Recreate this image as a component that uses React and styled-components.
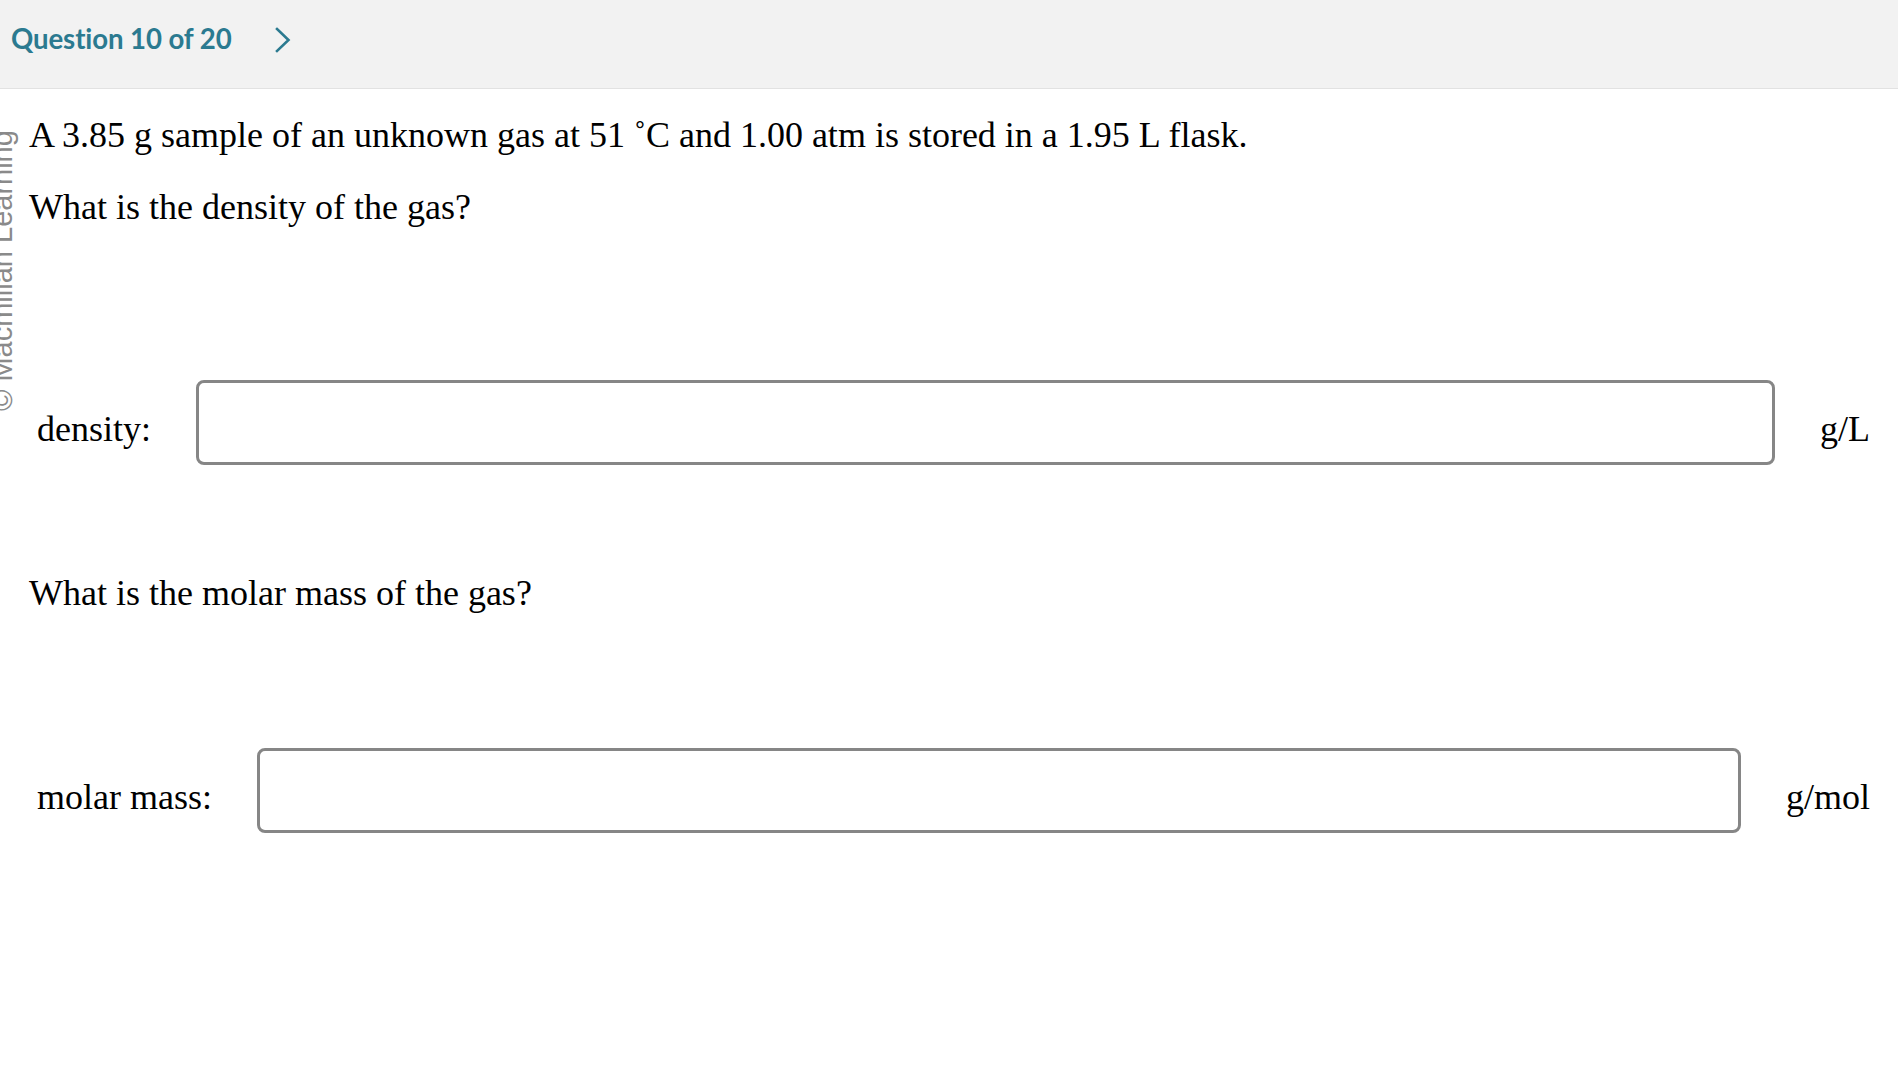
import React from 'react';
import styled, { createGlobalStyle } from 'styled-components';

const GlobalStyle = createGlobalStyle`
  html, body {
    margin: 0;
    padding: 0;
    background: #fff;
  }
  body {
    overflow: hidden;
  }
`;

const App = () => {
  return (
    <Page>
      <GlobalStyle />
      <Header>
        <QuestionTitle>Question 10 of 20</QuestionTitle>
        <NextButton aria-label="Next question">
          <svg width="16" height="26" viewBox="0 0 16 26" fill="none">
            <polyline
              points="2,2 13.5,13 2,24"
              stroke="#2b7a90"
              strokeWidth="2.6"
              strokeLinecap="square"
              strokeLinejoin="miter"
            />
          </svg>
        </NextButton>
      </Header>

      <Watermark>© Macmillan Learning</Watermark>

      <Content>
        <Prompt top={26}>
          A 3.85 g sample of an unknown gas at 51 ˚C and 1.00 atm is stored in a 1.95 L flask.
        </Prompt>
        <Prompt top={32}>What is the density of the gas?</Prompt>

        <AnswerRow top={153}>
          <FieldLabel>density:</FieldLabel>
          <AnswerInput type="text" />
          <Unit>g/L</Unit>
        </AnswerRow>

        <Prompt top={108}>What is the molar mass of the gas?</Prompt>

        <AnswerRow top={135}>
          <FieldLabel>molar mass:</FieldLabel>
          <AnswerInput type="text" />
          <Unit>g/mol</Unit>
        </AnswerRow>
      </Content>
    </Page>
  );
};

// Styled Components
const Page = styled.div`
  position: relative;
  width: 100%;
  min-height: 1068px;
  background: #fff;
`;

const Header = styled.header`
  height: 89px;
  box-sizing: border-box;
  background: #f2f2f2;
  border-bottom: 1px solid #e2e2e2;
  display: flex;
  align-items: center;
  padding: 0 0 11px 11px;
`;

const QuestionTitle = styled.h1`
  margin: 0;
  font-family: Lato, "Open Sans", sans-serif;
  font-weight: 700;
  font-size: 27.6px;
  letter-spacing: -0.1px;
  color: #2b7a90;
`;

const NextButton = styled.button`
  margin-left: 43px;
  margin-top: 2px;
  padding: 0;
  border: none;
  background: transparent;
  display: flex;
  align-items: center;
  cursor: pointer;
`;

const Watermark = styled.div`
  position: absolute;
  left: -12px;
  top: 411px;
  transform-origin: 0 0;
  transform: rotate(-90deg);
  font-family: "Liberation Sans", Arial, sans-serif;
  font-size: 29px;
  line-height: 29px;
  color: #8a8a8a;
  white-space: nowrap;
  pointer-events: none;
`;

const Content = styled.main`
  padding: 0 28px 0 29px;
  font-family: "Liberation Serif", "Times New Roman", serif;
  font-size: 36px;
  color: #000;
`;

const Prompt = styled.p`
  margin: ${(props) => props.top}px 0 0 0;
  line-height: 40px;
`;

const AnswerRow = styled.div`
  margin-top: ${(props) => props.top}px;
  display: flex;
  align-items: center;
  gap: 45px;
  padding-left: 8px;
`;

const FieldLabel = styled.label`
  line-height: 40px;
  padding-top: 12px;
  white-space: nowrap;
`;

const AnswerInput = styled.input`
  flex: 1;
  height: 85px;
  box-sizing: border-box;
  border: 3px solid #868686;
  border-radius: 8px;
  background: #fff;
  font-family: "Liberation Serif", "Times New Roman", serif;
  font-size: 36px;
  padding: 0 12px;
  outline: none;
`;

const Unit = styled.span`
  line-height: 40px;
  padding-top: 12px;
  white-space: nowrap;
`;

export default App;
